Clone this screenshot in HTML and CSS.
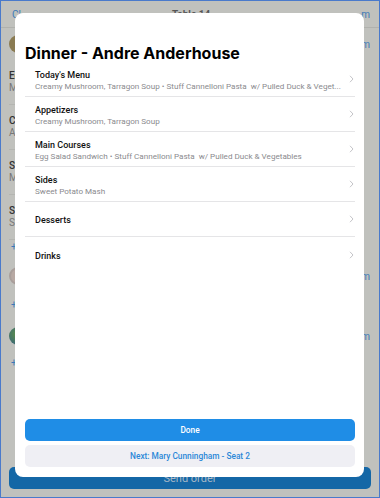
FILE: index.html
```html
<!DOCTYPE html>
<html>
<head>
<meta charset="utf-8">
<link rel="stylesheet" href="styles.css">
</head>
<body>
<div class="screen">
  <div class="bg">
    <div class="bg-header">
      <span class="bg-link">Cl</span>
      <span class="bg-title">Table 14</span>
      <span class="bg-link">m</span>
    </div>
    <div class="bg-seat">
      <div class="avatar av1"></div>
      <span class="bg-link">m</span>
    </div>
    <div class="bg-item"><b>Eg</b><span>M</span></div>
    <div class="bg-item"><b>C</b><span>A</span></div>
    <div class="bg-item"><b>St</b><span>M</span></div>
    <div class="bg-item"><b>Se</b><span>Si</span></div>
    <div class="bg-add">+</div>
    <div class="bg-seat2">
      <div class="avatar av2"></div>
      <span class="bg-link">m</span>
    </div>
    <div class="bg-add">+</div>
    <div class="bg-seat2 seat3">
      <div class="avatar av3"></div>
      <span class="bg-link">m</span>
    </div>
    <div class="bg-add">+</div>
    <div class="bg-spacer"></div>
    <div class="send">Send order</div>
  </div>

  <div class="modal">
    <h1 class="modal-title">Dinner - Andre Anderhouse</h1>
    <ul class="menu">
      <li class="row">
        <div class="row-text">
          <div class="row-name">Today's Menu</div>
          <div class="row-sub">Creamy Mushroom, Tarragon Soup • Stuff Cannelloni Pasta&nbsp; w/ Pulled Duck &amp; Veget...</div>
        </div>
        <svg class="chev" width="5" height="8" viewBox="0 0 5 8"><path d="M1 0.8l3 3.2-3 3.2" fill="none" stroke="#c4c4c8" stroke-width="1"/></svg>
      </li>
      <li class="row">
        <div class="row-text">
          <div class="row-name">Appetizers</div>
          <div class="row-sub">Creamy Mushroom, Tarragon Soup</div>
        </div>
        <svg class="chev" width="5" height="8" viewBox="0 0 5 8"><path d="M1 0.8l3 3.2-3 3.2" fill="none" stroke="#c4c4c8" stroke-width="1"/></svg>
      </li>
      <li class="row">
        <div class="row-text">
          <div class="row-name">Main Courses</div>
          <div class="row-sub">Egg Salad Sandwich • Stuff Cannelloni Pasta&nbsp; w/ Pulled Duck &amp; Vegetables</div>
        </div>
        <svg class="chev" width="5" height="8" viewBox="0 0 5 8"><path d="M1 0.8l3 3.2-3 3.2" fill="none" stroke="#c4c4c8" stroke-width="1"/></svg>
      </li>
      <li class="row">
        <div class="row-text">
          <div class="row-name">Sides</div>
          <div class="row-sub">Sweet Potato Mash</div>
        </div>
        <svg class="chev" width="5" height="8" viewBox="0 0 5 8"><path d="M1 0.8l3 3.2-3 3.2" fill="none" stroke="#c4c4c8" stroke-width="1"/></svg>
      </li>
      <li class="row">
        <div class="row-text">
          <div class="row-name">Desserts</div>
        </div>
        <svg class="chev" width="5" height="8" viewBox="0 0 5 8"><path d="M1 0.8l3 3.2-3 3.2" fill="none" stroke="#c4c4c8" stroke-width="1"/></svg>
      </li>
      <li class="row last">
        <div class="row-text">
          <div class="row-name">Drinks</div>
        </div>
        <svg class="chev" width="5" height="8" viewBox="0 0 5 8"><path d="M1 0.8l3 3.2-3 3.2" fill="none" stroke="#c4c4c8" stroke-width="1"/></svg>
      </li>
    </ul>
    <div class="actions">
      <button class="btn btn-primary">Done</button>
      <button class="btn btn-secondary">Next: Mary Cunningham - Seat 2</button>
    </div>
  </div>
</div>
</body>
</html>
```

FILE: styles.css
```css
* { box-sizing: border-box; }
html, body { margin: 0; padding: 0; }
body {
  width: 380px;
  height: 498px;
  font-family: Roboto, "Liberation Sans", Arial, sans-serif;
  -webkit-font-smoothing: antialiased;
}
.screen {
  position: relative;
  width: 380px;
  height: 498px;
  border: 1px solid #4a7acb;
  background: #c0c1bd;
  overflow: hidden;
}
.bg {
  display: flex;
  flex-direction: column;
  height: 100%;
}
.bg-link { color: #3b7ab8; font-size: 10px; }
.bg-header {
  height: 27px;
  display: flex;
  align-items: center;
  justify-content: space-between;
  padding: 0 9px 0 11px;
  border-bottom: 1px solid #b0b1ad;
  font-size: 10px;
}
.bg-title { color: #555; font-weight: 600; }
.bg-seat {
  display: flex;
  align-items: center;
  justify-content: space-between;
  padding: 0 9px 0 8px;
  height: 32px;
}
.bg-seat2 {
  display: flex;
  align-items: center;
  justify-content: space-between;
  padding: 0 9px 0 8px;
  height: 44px;
}
.seat3 { padding-top: 4px; }
.avatar {
  width: 18px;
  height: 18px;
  border-radius: 50%;
}
.av1 { background: #8a7b52; }
.av2 { background: #b7a9a3; border: 2px solid #a89e9a; }
.av3 { background: radial-gradient(circle at 40% 40%, #5b8c4a, #2e5a8a); }
.bg-item {
  display: flex;
  flex-direction: column;
  justify-content: center;
  height: 45px;
  width: 14px;
  margin-left: 8px;
  white-space: nowrap;
  border-bottom: 1px solid #b4b5b1;
  font-size: 10px;
  line-height: 12px;
}
.bg-item b { color: #333; font-weight: 500; }
.bg-item span { color: #777; }
.bg-add { color: #3b7ab8; font-size: 10px; padding-left: 10px; height: 14px; line-height: 14px; }
.bg-spacer { flex: 1; }
.send {
  margin: 0 8px 8px 8px;
  height: 22px;
  border-radius: 5px;
  background: #1467a6;
  color: #a6b7c6;
  font-size: 11px;
  display: flex;
  align-items: center;
  justify-content: center;
}

.modal {
  position: absolute;
  left: 14px;
  top: 12px;
  width: 349px;
  height: 464px;
  background: #fff;
  border-radius: 8px;
  display: flex;
  flex-direction: column;
  padding: 0 9px 10px 10px;
}
.modal-title {
  margin: 0;
  padding-top: 31px;
  font-family: Inter, "Liberation Sans", Arial, sans-serif;
  font-size: 16px;
  font-weight: 700;
  color: #000;
  line-height: 19px;
  height: 49px;
}
.menu {
  list-style: none;
  margin: 0;
  padding: 0;
  flex: 1;
}
.row {
  display: flex;
  align-items: center;
  height: 35px;
  padding-left: 10px;
  padding-right: 1px;
  border-bottom: 1px solid #e5e5e7;
}
.row.last { border-bottom: none; }
.row-text { flex: 1; min-width: 0; padding-top: 3px; }
.row-name {
  font-size: 9px;
  font-weight: 500;
  color: #111;
  line-height: 11px;
}
.row-sub {
  font-size: 8.1px;
  color: #8a8a8e;
  line-height: 11px;
  white-space: nowrap;
}
.chev { flex: none; margin-left: 8px; }
.actions {
  display: flex;
  flex-direction: column;
  gap: 4px;
}
.btn {
  height: 22px;
  border: none;
  border-radius: 5px;
  font-family: inherit;
  font-size: 8.3px;
  font-weight: 500;
  padding: 0;
}
.btn-primary { background: #1f8de6; color: #fff; }
.btn-secondary { background: #efeff4; color: #2b88d8; }
```
